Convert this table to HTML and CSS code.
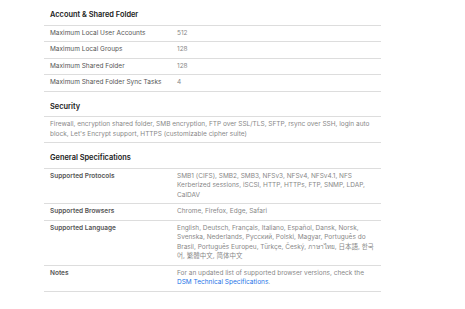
FILE: index.html
```html
<!DOCTYPE html>
<html lang="en">
<head>
    <meta charset="UTF-8">
    <meta name="viewport" content="width=device-width, initial-scale=1.0">
    <title>Specifications</title>
    <link rel="stylesheet" href="styles.css">
</head>
<body>
    <div class="specs">
        <div class="spec-title">Account &amp; Shared Folder</div>
        <table class="spec-table plain">
            <tr><td class="label">Maximum Local User Accounts</td><td class="value">512</td></tr>
            <tr><td class="label">Maximum Local Groups</td><td class="value">128</td></tr>
            <tr><td class="label">Maximum Shared Folder</td><td class="value">128</td></tr>
            <tr><td class="label">Maximum Shared Folder Sync Tasks</td><td class="value">4</td></tr>
        </table>

        <div class="spec-title">Security</div>
        <div class="spec-text">Firewall, encryption shared folder, SMB encryption, FTP over SSL/TLS, SFTP, rsync over SSH, login auto block, Let's Encrypt support, HTTPS (customizable cipher suite)</div>

        <div class="spec-title">General Specifications</div>
        <table class="spec-table">
            <tr>
                <td class="label">Supported Protocols</td>
                <td class="value">SMB1 (CIFS), SMB2, SMB3, NFSv3, NFSv4, NFSv4.1, NFS Kerberized sessions, iSCSI, HTTP, HTTPs, FTP, SNMP, LDAP, CalDAV</td>
            </tr>
            <tr>
                <td class="label">Supported Browsers</td>
                <td class="value">Chrome, Firefox, Edge, Safari</td>
            </tr>
            <tr>
                <td class="label">Supported Language</td>
                <td class="value">English, Deutsch, Français, Italiano, Español, Dansk, Norsk, Svenska, Nederlands, Русский, Polski, Magyar, Português do Brasil, Português Europeu, Türkçe, Český, ภาษาไทย, 日本語, 한국어, 繁體中文, 简体中文</td>
            </tr>
            <tr>
                <td class="label">Notes</td>
                <td class="value">For an updated list of supported browser versions, check the <a href="#">DSM Technical Specifications</a>.</td>
            </tr>
        </table>
    </div>
</body>
</html>
```

FILE: styles.css
```css
body {
    margin: 0;
    background: #fff;
    font-family: Inter, "Noto Sans", "Noto Sans CJK KR", "Noto Sans CJK JP", sans-serif;
}
.specs {
    width: 337px;
    margin-left: 44px;
}
.spec-title {
    padding: 10px 6px 4.5px;
    font-size: 7.4px;
    line-height: 10px;
    font-weight: 600;
    color: #222;
    border-bottom: 1px solid #ddd;
}
.spec-table {
    width: 100%;
    table-layout: fixed;
    border-collapse: collapse;
    font-size: 6.5px;
    line-height: 9.5px;
}
.spec-table td {
    padding: 3px 6px;
    border-bottom: 1px solid #ddd;
    vertical-align: top;
}
.spec-table .label {
    width: 115px;
    color: #555;
    font-weight: 600;
}
.spec-table.plain .label {
    font-weight: 400;
}
.spec-table .value {
    color: #888;
}
.spec-text {
    padding: 3px 6px;
    font-size: 6.5px;
    line-height: 9.5px;
    color: #888;
    border-bottom: 1px solid #ddd;
}
a {
    color: #1a73e8;
    text-decoration: none;
}
```
